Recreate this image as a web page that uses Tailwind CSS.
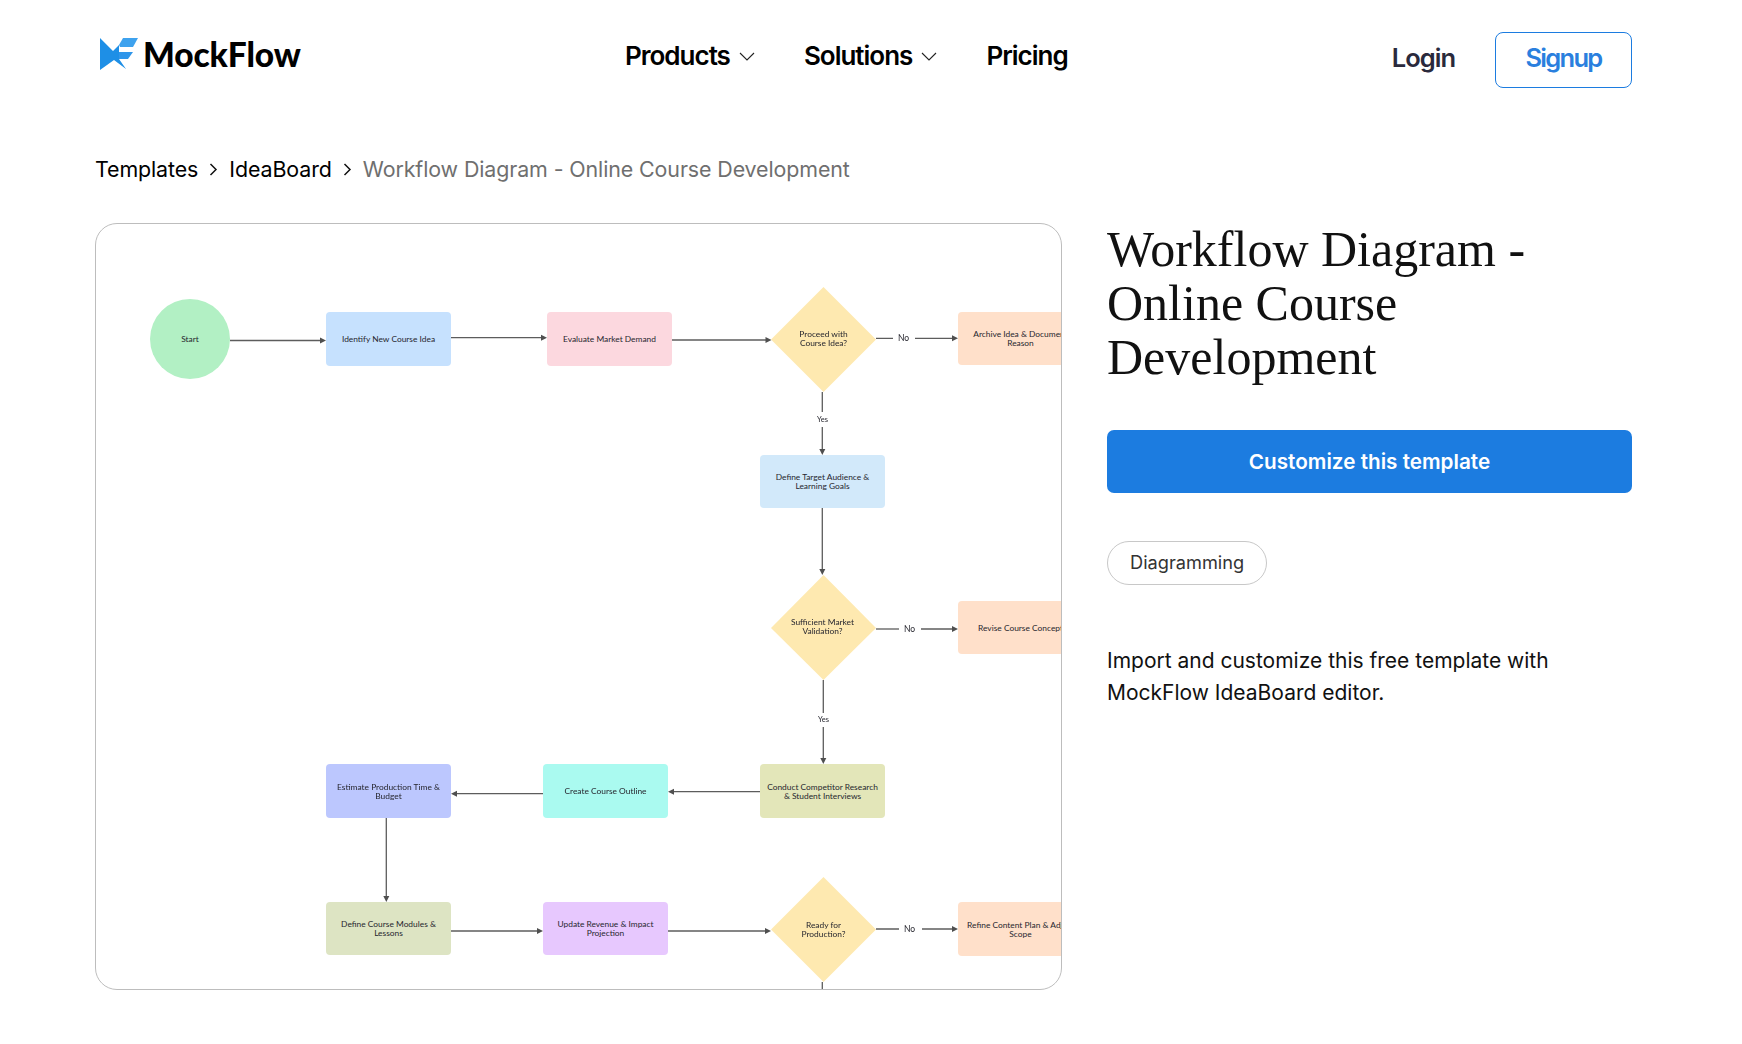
<!DOCTYPE html>
<html lang="en">
<head>
  <meta charset="UTF-8" />
  <title>Workflow Diagram - Online Course Development</title>
  <script src="https://cdn.jsdelivr.net/npm/@tailwindcss/browser@4"></script>
</head>
<body class="bg-white font-['Inter',sans-serif] text-black overflow-hidden">
  <div class="w-[1742px] h-[1044px] pl-[95px] pr-[110px]">

    <!-- Header -->
    <header class="h-[137px] flex items-start pt-[32px]">
      <a href="#" class="flex items-center gap-[5px] w-[530px] pl-[5px] h-[44px]">
        <svg class="w-[38px] h-[34px] shrink-0" viewBox="0 0 38 34">
          <polygon points="0,1 13,14 19,8 19,22 26,32 14,23 0,33" fill="#1e8fe6" />
          <polygon points="19,8 23,1 38,1 33,10 20,10" fill="#3ea2ee" />
          <polygon points="19,15 33,15 28,22 19,22" fill="#2f96ea" />
        </svg>
        <span class="font-['Lato',sans-serif] font-black text-[33.5px] leading-none tracking-[-0.1px] mt-[1px]">MockFlow</span>
      </a>
      <nav class="flex items-center gap-[49px] h-[46px] font-semibold text-[26px] tracking-[-1px]">
        <a href="#" class="flex items-center gap-[9px]">Products
          <svg class="w-[16px] h-[9px] mt-[3px]" viewBox="0 0 16 9" fill="none" stroke="#222" stroke-width="1.1"><path d="M1 1l7 7 7-7" /></svg>
        </a>
        <a href="#" class="flex items-center gap-[9px]">Solutions
          <svg class="w-[16px] h-[9px] mt-[3px]" viewBox="0 0 16 9" fill="none" stroke="#222" stroke-width="1.1"><path d="M1 1l7 7 7-7" /></svg>
        </a>
        <a href="#">Pricing</a>
      </nav>
      <div class="ml-auto flex items-center gap-[40px] font-semibold text-[25.5px]">
        <a href="#" class="text-[#2a2a3c] -mt-[3px] tracking-[-1px]">Login</a>
        <a href="#" class="w-[137px] h-[56px] pb-[3px] flex items-center justify-center rounded-[8px] border border-[#1c7ce0] text-[#2a7fde] tracking-[-1.7px]">Signup</a>
      </div>
    </header>

    <!-- Breadcrumb -->
    <div class="flex items-center h-[62px] pt-[2px] text-[21.4px] tracking-[-0.1px]">
      <a href="#">Templates</a>
      <svg class="w-[9px] h-[13px] mx-[11px]" viewBox="0 0 9 13" fill="none" stroke="#111" stroke-width="1.5"><path d="M1.5 1l5.5 5.5L1.5 12" /></svg>
      <a href="#">IdeaBoard</a>
      <svg class="w-[9px] h-[13px] mx-[11px]" viewBox="0 0 9 13" fill="none" stroke="#111" stroke-width="1.5"><path d="M1.5 1l5.5 5.5L1.5 12" /></svg>
      <span class="text-[#6f6f6f]">Workflow Diagram - Online Course Development</span>
    </div>

    <main class="flex gap-[45px] mt-[24px]">
      <!-- Diagram card: nodes are placed on a free canvas -->
      <div class="relative w-[967px] h-[767px] shrink-0 overflow-hidden rounded-[22px] border border-[#bdbdbd] font-['Lato',sans-serif] text-[8.4px] leading-[9px] text-[#26262e] text-center blur-[0.35px]">
        <!-- canvas origin is at page 96,224 -->
        <svg class="absolute left-0 top-0 w-[967px] h-[766px]" viewBox="96 224 967 766" fill="none" stroke="#5c5c5c" stroke-width="1.3">
          <path d="M230 340.5H322" /><path d="M451 337.7H543" /><path d="M672 340H767" />
          <path d="M876 338.3H893" /><path d="M915 338.3H954" />
          <path d="M822.3 392V412" /><path d="M822.3 427V451" /><path d="M822.3 508V571" />
          <path d="M876 629H899" /><path d="M921 629H954" />
          <path d="M823.3 680V713" /><path d="M823.3 727V760" />
          <path d="M760 791.7H672" /><path d="M543 793.7H455" />
          <path d="M386.3 817V898" />
          <path d="M451 931H539" /><path d="M668 931H767" />
          <path d="M876 929H899" /><path d="M922 929H954" />
          <path d="M822.3 982V990" />
          <g fill="#4f4f4f" stroke="none">
            <polygon points="326,340.5 320,337.5 320,343.5" />
            <polygon points="547,337.7 541,334.7 541,340.7" />
            <polygon points="771.5,340 765.5,337 765.5,343" />
            <polygon points="958,338.3 952,335.3 952,341.3" />
            <polygon points="822.3,455 819.3,449 825.3,449" />
            <polygon points="822.3,575 819.3,569 825.3,569" />
            <polygon points="958,629 952,626 952,632" />
            <polygon points="823.3,764 820.3,758 826.3,758" />
            <polygon points="668,791.7 674,788.7 674,794.7" />
            <polygon points="451,793.7 457,790.7 457,796.7" />
            <polygon points="386.3,902 383.3,896 389.3,896" />
            <polygon points="543,931 537,928 537,934" />
            <polygon points="771,931 765,928 765,934" />
            <polygon points="958,929 952,926 952,932" />
          </g>
          <g stroke="none" fill="#fee9b0">
            <polygon points="823.5,287 876,339.5 823.5,392 771,339.5" />
            <polygon points="823.5,575 876,628 823.5,680 771,628" />
            <polygon points="823.5,877 876,929.5 823.5,982 771,929.5" />
          </g>
        </svg>

        <div class="absolute left-[54px] top-[75px] w-[80px] h-[80px] rounded-full bg-[#b2f0c4] flex items-center justify-center">Start</div>
        <div class="absolute left-[230px] top-[88px] w-[125px] h-[54px] rounded-[4px] bg-[#c6e1fe] flex items-center justify-center px-2 pt-[1px]">Identify New Course Idea</div>
        <div class="absolute left-[451px] top-[88px] w-[125px] h-[54px] rounded-[4px] bg-[#fcd8df] flex items-center justify-center px-2 pt-[1px]">Evaluate Market Demand</div>
        <div class="absolute left-[862px] top-[88px] w-[125px] h-[53px] rounded-[4px] bg-[#ffe0ca] flex items-center justify-center px-1 pt-[1px]">Archive Idea &amp; Document<br />Reason</div>
        <div class="absolute left-[675px] top-[62px] w-[105px] h-[105px] flex items-center justify-center">Proceed with<br />Course Idea?</div>
        <div class="absolute left-[664px] top-[231px] w-[125px] h-[53px] rounded-[4px] bg-[#d2e9fa] flex items-center justify-center pt-[1px]">Define Target Audience &amp;<br />Learning Goals</div>
        <div class="absolute left-[674px] top-[351px] w-[105px] h-[105px] flex items-center justify-center pb-[1px]">Sufficient Market<br />Validation?</div>
        <div class="absolute left-[862px] top-[377px] w-[125px] h-[53px] rounded-[4px] bg-[#ffe0ca] flex items-center justify-center pt-[1px]">Revise Course Concept</div>
        <div class="absolute left-[664px] top-[540px] w-[125px] h-[54px] rounded-[4px] bg-[#e3e6b9] flex items-center justify-center pt-[1px]">Conduct Competitor Research<br />&amp; Student Interviews</div>
        <div class="absolute left-[447px] top-[540px] w-[125px] h-[54px] rounded-[4px] bg-[#aafaf0] flex items-center justify-center pt-[1px]">Create Course Outline</div>
        <div class="absolute left-[230px] top-[540px] w-[125px] h-[54px] rounded-[4px] bg-[#bcc7fe] flex items-center justify-center pt-[1px]">Estimate Production Time &amp;<br />Budget</div>
        <div class="absolute left-[230px] top-[678px] w-[125px] h-[53px] rounded-[4px] bg-[#dde4c3] flex items-center justify-center pt-[1px]">Define Course Modules &amp;<br />Lessons</div>
        <div class="absolute left-[447px] top-[678px] w-[125px] h-[53px] rounded-[4px] bg-[#e7c8fe] flex items-center justify-center pt-[1px]">Update Revenue &amp; Impact<br />Projection</div>
        <div class="absolute left-[675px] top-[653px] w-[105px] h-[105px] flex items-center justify-center">Ready for<br />Production?</div>
        <div class="absolute left-[862px] top-[678px] w-[125px] h-[54px] rounded-[4px] bg-[#ffe0ca] flex items-center justify-center pt-[1px]">Refine Content Plan &amp; Adjust<br />Scope</div>

        <span class="absolute left-[802px] top-[110px] text-[8.5px]">No</span>
        <span class="absolute left-[808px] top-[401px] text-[8.5px]">No</span>
        <span class="absolute left-[808px] top-[701px] text-[8.5px]">No</span>
        <span class="absolute left-[721px] top-[191px] text-[7.5px]">Yes</span>
        <span class="absolute left-[722px] top-[491px] text-[7.5px]">Yes</span>
      </div>

      <!-- Details -->
      <div class="flex-1">
        <h1 class="-mt-[1px] font-['Liberation_Serif',serif] text-[50px] leading-[54px] text-[#111]">Workflow Diagram - Online Course Development</h1>
        <a href="#" class="mt-[46px] h-[63px] flex items-center justify-center rounded-[7px] bg-[#1c7ce0] text-white font-semibold text-[20.7px]">Customize this template</a>
        <div class="mt-[48px]">
          <span class="inline-flex items-center h-[44px] px-[22px] rounded-full border border-[#c8c8c8] text-[#333] text-[18.2px]">Diagramming</span>
        </div>
        <p class="mt-[60px] text-[21px] leading-[32px] text-[#111]">Import and customize this free template with MockFlow IdeaBoard editor.</p>
      </div>
    </main>
  </div>
</body>
</html>
